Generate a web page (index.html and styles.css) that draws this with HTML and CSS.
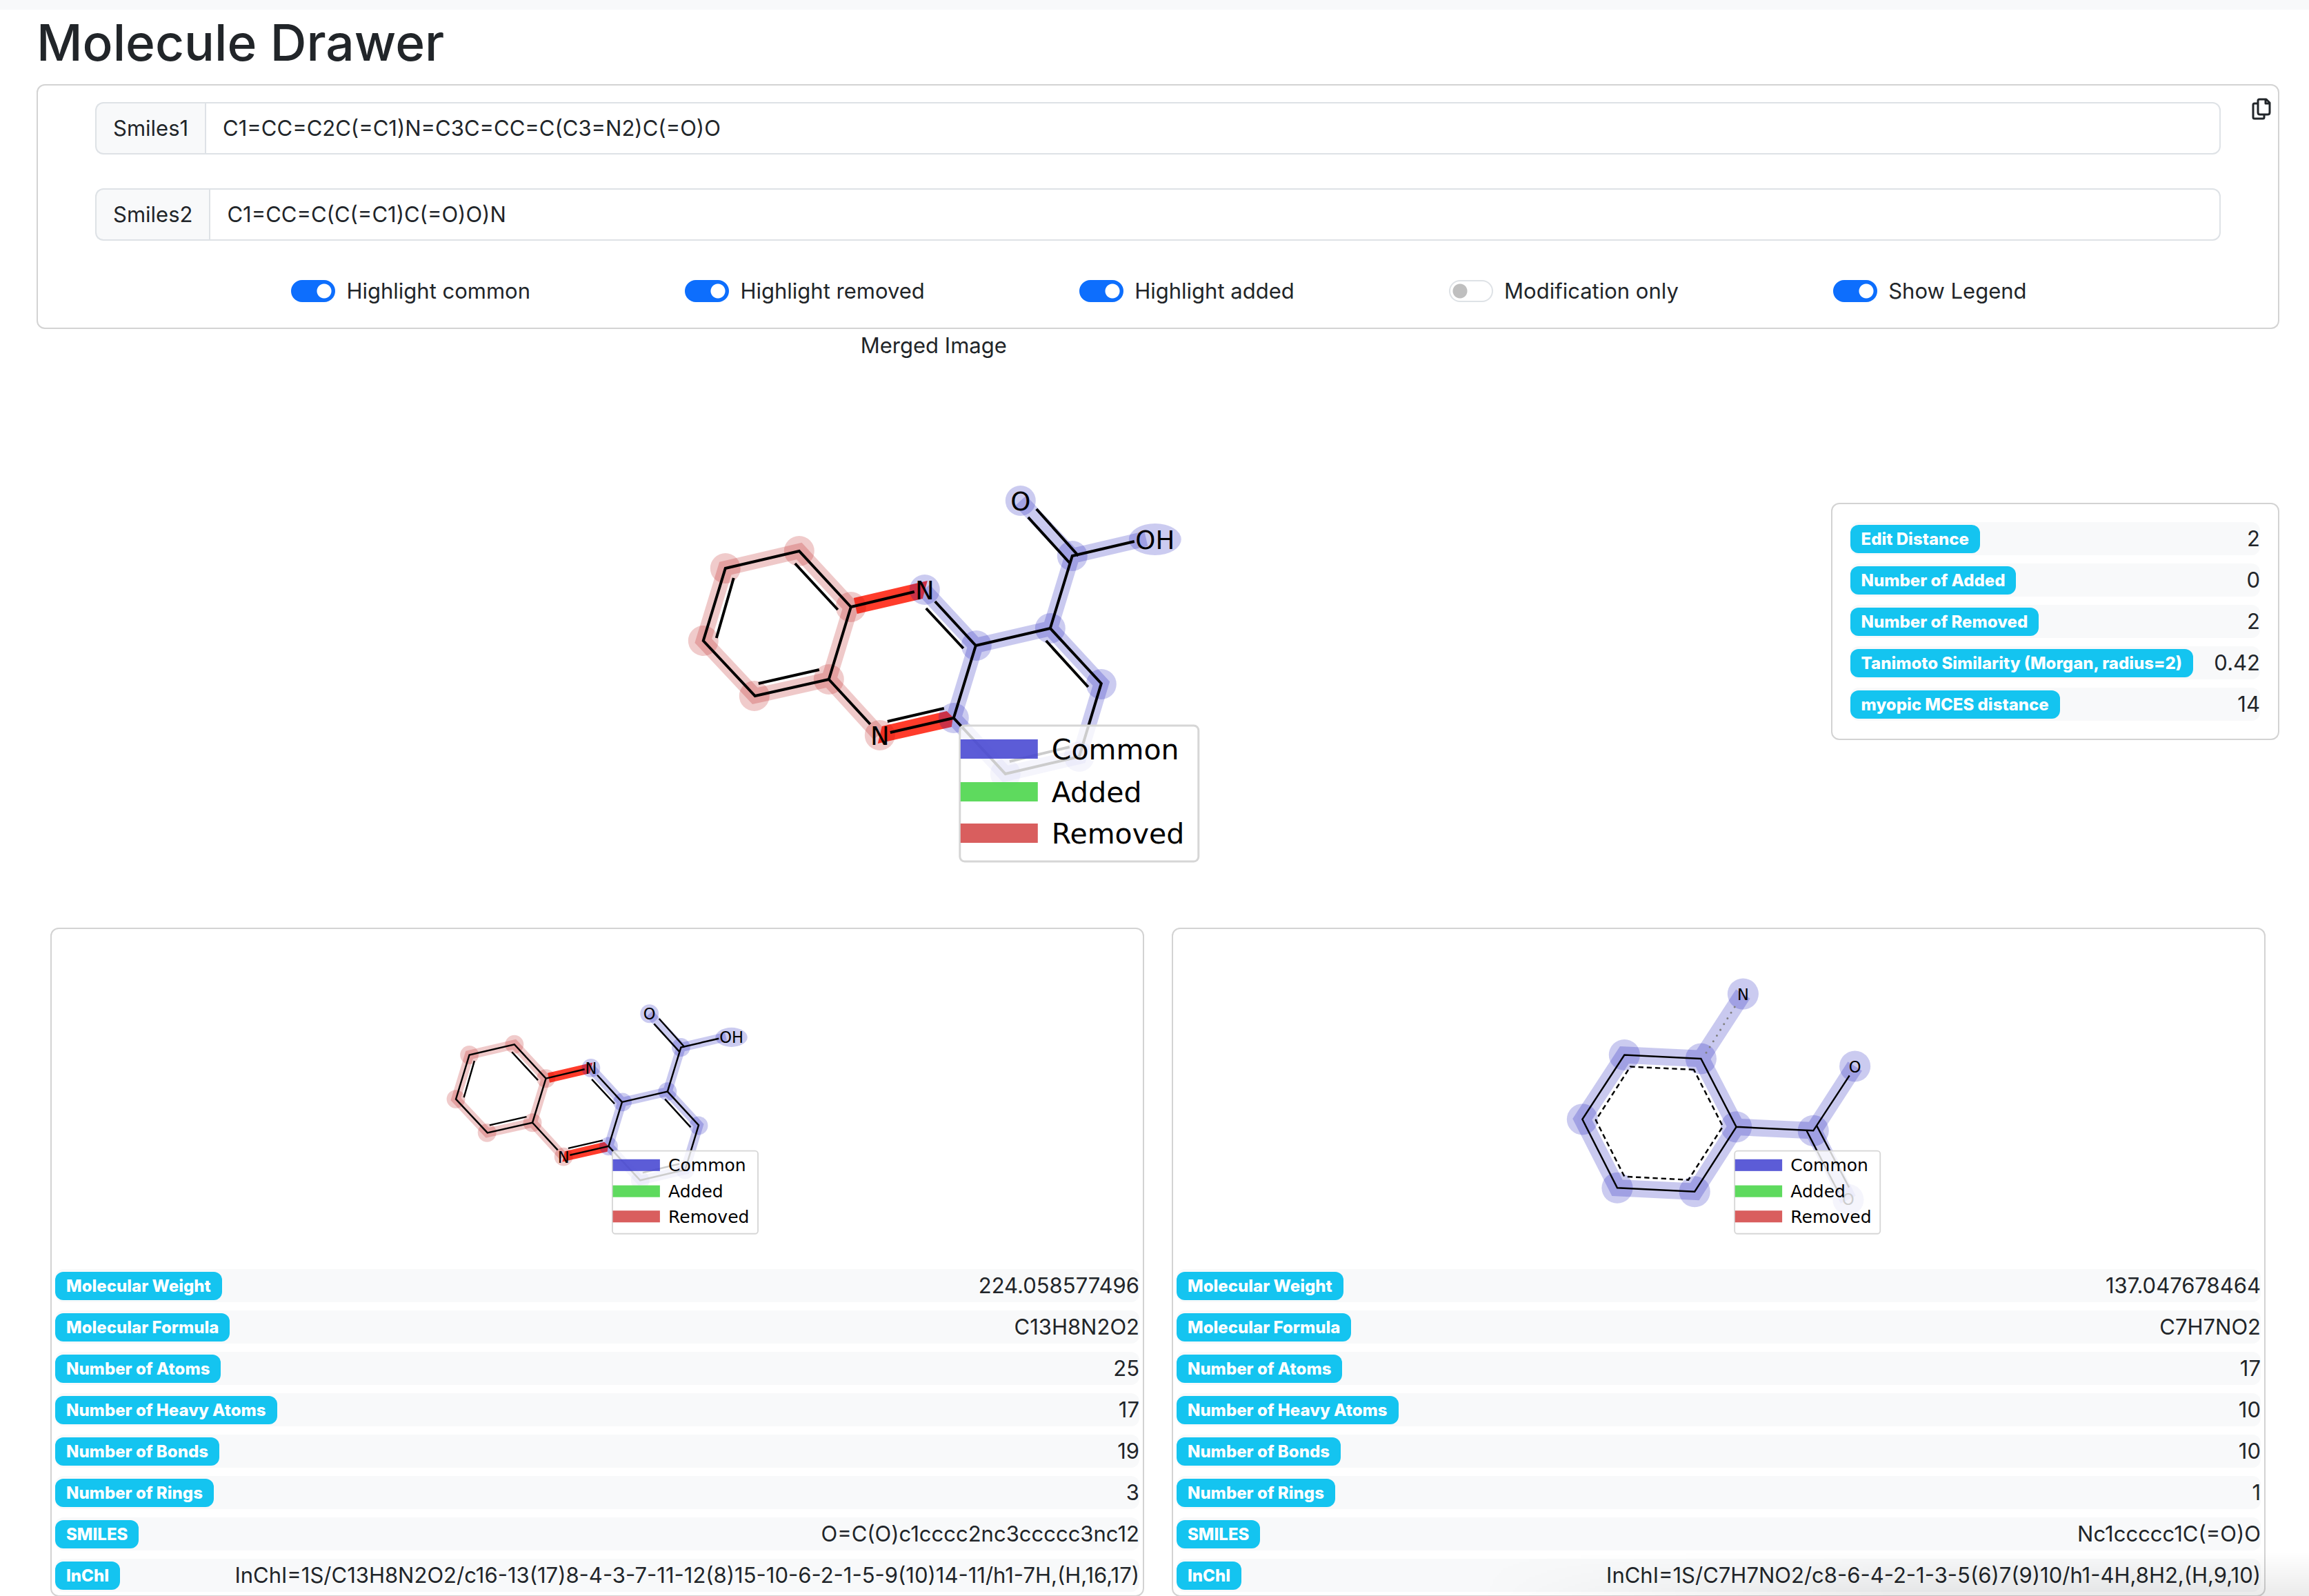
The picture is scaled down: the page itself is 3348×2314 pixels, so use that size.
FILE: index.html
```html
<!DOCTYPE html>
<html lang="en">
<head>
<meta charset="utf-8">
<title>Molecule Drawer</title>
<link rel="stylesheet" href="styles.css">
</head>
<body>
<svg class="defs" aria-hidden="true">
  <symbol id="legend" viewBox="0 0 1600 800">
    <rect class="legend-box" x="838" y="527" width="346" height="197" rx="7"/>
    <rect class="key-common" x="839" y="547" width="112" height="28"/>
    <rect class="key-added" x="839" y="609" width="112" height="28"/>
    <rect class="key-removed" x="839" y="669" width="112" height="28"/>
    <text class="legend-text" x="971" y="576">Common</text>
    <text class="legend-text" x="971" y="638">Added</text>
    <text class="legend-text" x="971" y="698">Removed</text>
  </symbol>
  <symbol id="phenazine" viewBox="0 0 1600 800">
    <g class="halo-removed halo-narrow">
      <path d="M680 355L605 274L498 299L466 404L541 484L648 460Z"/>
      <path d="M648 460L721 540"/>
    </g>
    <g class="halo-common halo-narrow">
      <path d="M969 386L1043 466L1011 572L904 597L829 516L861 411Z"/>
      <path d="M786 330L861 411M969 386L1001 281L926 201M1001 281L1108 256"/>
    </g>
    <path class="cut-bond" d="M684 342L791 317L784 343L689 365ZM725 528L819 506L828 515L826 529L719 553Z"/>
    <g class="atom-removed">
      <circle cx="680" cy="355" r="22"/><circle cx="605" cy="274" r="22"/><circle cx="498" cy="299" r="22"/>
      <circle cx="466" cy="404" r="22"/><circle cx="540" cy="484" r="22"/><circle cx="648" cy="460" r="22"/>
      <circle cx="722" cy="541" r="22"/>
    </g>
    <g class="atom-common">
      <circle cx="787" cy="330" r="22"/><circle cx="862" cy="411" r="22"/><circle cx="829" cy="516" r="22"/>
      <circle cx="969" cy="386" r="22"/><circle cx="1043" cy="467" r="22"/><circle cx="1011" cy="572" r="22"/>
      <circle cx="904" cy="597" r="22"/><circle cx="1001" cy="281" r="22"/><circle cx="926" cy="201" r="22"/>
      <ellipse cx="1121" cy="257" rx="38" ry="23"/>
    </g>
    <g class="bond">
      <path d="M680 355L605 274L498 299L466 404L541 484L648 460ZL772 333M648 460L708 525"/>
      <path d="M802 347L861 411L829 516L904 597L1011 572L1043 466L969 386L861 411M829 516L737 537"/>
      <path d="M969 386L1001 281L1091 260M949 213L1010 281M937 225L997 291"/>
      <path d="M599 292L661 359M510 313L485 400M546 466L634 446M789 357L843 415M733 521L815 502M963 404L1024 471M910 579L997 558"/>
    </g>
    <g class="atom-label">
      <text x="787" y="344">N</text><text x="722" y="555">N</text>
      <text x="926" y="215">O</text><text x="1121" y="271">OH</text>
    </g>
  </symbol>
</svg>

<div class="topbar"></div>
<main class="page">
  <h1 class="title">Molecule Drawer</h1>

  <form class="card controls">
    <div class="fields">
      <div class="field">
        <label class="field-label" for="smiles1">Smiles1</label>
        <input class="field-input" id="smiles1" type="text" value="C1=CC=C2C(=C1)N=C3C=CC=C(C3=N2)C(=O)O">
      </div>
      <div class="field">
        <label class="field-label" for="smiles2">Smiles2</label>
        <input class="field-input" id="smiles2" type="text" value="C1=CC=C(C(=C1)C(=O)O)N">
      </div>
      <div class="switches">
        <label class="switch"><input type="checkbox" checked>Highlight common</label>
        <label class="switch"><input type="checkbox" checked>Highlight removed</label>
        <label class="switch"><input type="checkbox" checked>Highlight added</label>
        <label class="switch"><input type="checkbox">Modification only</label>
        <label class="switch"><input type="checkbox" checked>Show Legend</label>
      </div>
    </div>
    <button class="copy" type="button" aria-label="Copy">
      <svg viewBox="0 0 28 32" width="28" height="32">
        <path d="M11 2H21L26 7V21Q26 24 23 24H12Q9 24 9 21V4Q9 2 11 2ZM20 2V8H26M8 8H4Q2 8 2 10V28Q2 30 4 30H16Q18 30 18 28V25"/>
      </svg>
    </button>
  </form>

  <section class="overview">
    <figure class="merged">
      <figcaption>Merged Image</figcaption>
      <svg class="drawing-large" viewBox="0 0 1600 800">
        <use href="#phenazine" width="1600" height="800"/>
        <use href="#legend" width="1600" height="800"/>
      </svg>
    </figure>
    <dl class="card stats">
      <div class="row"><dt>Edit Distance</dt><dd>2</dd></div>
      <div class="row"><dt>Number of Added</dt><dd>0</dd></div>
      <div class="row"><dt>Number of Removed</dt><dd>2</dd></div>
      <div class="row"><dt>Tanimoto Similarity (Morgan, radius=2)</dt><dd>0.42</dd></div>
      <div class="row"><dt>myopic MCES distance</dt><dd>14</dd></div>
    </dl>
  </section>

  <section class="molecules">
    <article class="card molecule">
      <svg class="drawing-small" viewBox="2 8 1600 800">
        <use href="#phenazine" width="1600" height="800"/>
        <use href="#legend" width="1600" height="800"/>
      </svg>
      <dl class="facts">
        <div class="row"><dt>Molecular Weight</dt><dd>224.058577496</dd></div>
        <div class="row"><dt>Molecular Formula</dt><dd>C13H8N2O2</dd></div>
        <div class="row"><dt>Number of Atoms</dt><dd>25</dd></div>
        <div class="row"><dt>Number of Heavy Atoms</dt><dd>17</dd></div>
        <div class="row"><dt>Number of Bonds</dt><dd>19</dd></div>
        <div class="row"><dt>Number of Rings</dt><dd>3</dd></div>
        <div class="row"><dt>SMILES</dt><dd>O=C(O)c1cccc2nc3ccccc3nc12</dd></div>
        <div class="row"><dt>InChI</dt><dd>InChI=1S/C13H8N2O2/c16-13(17)8-4-3-7-11-12(8)15-10-6-2-1-5-9(10)14-11/h1-7H,(H,16,17)</dd></div>
      </dl>
    </article>
    <article class="card molecule">
      <svg class="drawing-small" viewBox="0 8 1600 800">
        <g class="halo-common halo-wide">
          <path d="M758 308L576 299L476 452L559 615L743 624L842 470Z"/>
          <path d="M858 154L758 308M842 470L1025 479L1124 326M1025 479L1108 643"/>
        </g>
        <g class="atom-common">
          <circle cx="858" cy="154" r="37"/><circle cx="758" cy="308" r="37"/><circle cx="576" cy="299" r="37"/>
          <circle cx="476" cy="452" r="37"/><circle cx="559" cy="615" r="37"/><circle cx="743" cy="624" r="37"/>
          <circle cx="842" cy="470" r="37"/><circle cx="1025" cy="479" r="37"/><circle cx="1124" cy="326" r="37"/>
          <circle cx="1108" cy="643" r="37"/>
        </g>
        <g class="bond">
          <path d="M758 308L576 299L476 452L559 615L743 624L842 470ZM842 470L1025 479L1111 348"/>
          <path d="M1009 479L1085 626M1033 467L1110 614"/>
          <path class="aromatic" d="M741 334L590 327L508 454L576 588L728 596L810 469Z"/>
        </g>
        <path class="dotted" d="M838 185L766 301"/>
        <g class="atom-label">
          <text x="858" y="168">N</text><text x="1124" y="340">O</text><text x="1108" y="656">O</text>
        </g>
        <use href="#legend" width="1600" height="800"/>
      </svg>
      <dl class="facts">
        <div class="row"><dt>Molecular Weight</dt><dd>137.047678464</dd></div>
        <div class="row"><dt>Molecular Formula</dt><dd>C7H7NO2</dd></div>
        <div class="row"><dt>Number of Atoms</dt><dd>17</dd></div>
        <div class="row"><dt>Number of Heavy Atoms</dt><dd>10</dd></div>
        <div class="row"><dt>Number of Bonds</dt><dd>10</dd></div>
        <div class="row"><dt>Number of Rings</dt><dd>1</dd></div>
        <div class="row"><dt>SMILES</dt><dd>Nc1ccccc1C(=O)O</dd></div>
        <div class="row"><dt>InChI</dt><dd>InChI=1S/C7H7NO2/c8-6-4-2-1-3-5(6)7(9)10/h1-4H,8H2,(H,9,10)</dd></div>
      </dl>
    </article>
  </section>
</main>
<div class="corner-shade"></div>
</body>
</html>
```
FILE: styles.css
```css
* {
  box-sizing: border-box;
}

body {
  margin: 0;
  background: #fff;
  color: #212529;
  font: 31px/48px Inter, "Liberation Sans", sans-serif;
}

.defs {
  position: absolute;
  width: 0;
  height: 0;
}

.topbar {
  height: 14px;
  background: #f8f9fa;
}

.page {
  padding: 0 43px 0 53px;
}

.title {
  margin: 0 0 12px;
  font-size: 73px;
  font-weight: 500;
  line-height: 96px;
}

.card {
  border: 2px solid #d3d3d3;
  border-radius: 12px;
  background: #fff;
}

/* Input panel */
.controls {
  display: grid;
  grid-template-columns: minmax(0, 1fr) 83px;
  padding: 24px 0 28px 83px;
}

.fields {
  display: flex;
  flex-direction: column;
  gap: 49px;
}

.field {
  display: flex;
  height: 76px;
}

.field-label {
  padding: 12px 24px;
  border: 2px solid #dee2e6;
  border-right: 0;
  border-radius: 12px 0 0 12px;
  background: #f8f9fa;
}

.field-input {
  flex: 1;
  min-width: 0;
  padding: 12px 24px;
  border: 2px solid #dee2e6;
  border-radius: 0 12px 12px 0;
  background: #fff;
  color: inherit;
  font: inherit;
}

.switches {
  display: flex;
  justify-content: space-evenly;
  padding: 0 57px 1px 60px;
}

.switch {
  display: flex;
  align-items: center;
  gap: 16px;
}

.switch input {
  width: 64px;
  height: 32px;
  margin: 0;
  appearance: none;
  border: 2px solid #dee2e6;
  border-radius: 16px;
  background: radial-gradient(circle at 14px 14px, #bfbfbf 10px, transparent 11px) #fff;
}

.switch input:checked {
  border-color: #0d6efd;
  background: radial-gradient(circle at 46px 14px, #fff 10px, transparent 11px) #0d6efd;
  background-origin: padding-box;
  background-clip: border-box;
}

.copy {
  justify-self: end;
  align-self: start;
  margin: -6px 10px 0 0;
  padding: 0;
  border: 0;
  background: none;
}

.copy svg {
  display: block;
  fill: none;
  stroke: #212529;
  stroke-width: 3px;
  stroke-linejoin: round;
}

/* Merged image and comparison figures */
.overview {
  display: grid;
  grid-template-columns: 4fr 1fr;
  align-items: center;
}

.merged {
  margin: 0;
  text-align: center;
}

.drawing-large {
  display: block;
  width: 100%;
  height: 800px;
}

.drawing-small {
  display: block;
  width: 100%;
  height: 488px;
}

.stats,
.facts {
  display: flex;
  flex-direction: column;
  gap: 12px;
  margin: 0;
}

.stats {
  padding: 26px;
}

.row {
  display: flex;
  justify-content: space-between;
  border-radius: 12px;
  background: #f8f9fa;
}

.row dt {
  align-self: start;
  margin-top: 4px;
  padding: 8px 16px;
  border-radius: 12px;
  background: #14c4f0;
  color: #fff;
  font-size: 24px;
  font-weight: 800;
  line-height: 25px;
  white-space: nowrap;
}

.row dd {
  margin: 0;
  white-space: nowrap;
}

/* Molecule cards */
.molecules {
  display: grid;
  grid-template-columns: 1fr 1fr;
  gap: 40px;
  margin-top: 20px;
  padding: 0 20px;
}

.molecule {
  padding: 5px;
}

/* Soft shade in the lower right corner of the window */
.corner-shade {
  position: fixed;
  right: 0;
  bottom: 0;
  width: 36%;
  height: 64px;
  background: linear-gradient(to bottom, transparent, rgba(0, 0, 0, .08));
  mask-image: linear-gradient(to right, transparent, #000 50%);
  pointer-events: none;
}

/* Drawings */
.bond {
  fill: none;
  stroke: #000;
  stroke-width: 4px;
}

.aromatic {
  stroke-dasharray: 12 8;
}

.dotted {
  fill: none;
  stroke: #808080;
  stroke-width: 5px;
  stroke-linecap: round;
  stroke-dasharray: 0 16;
}

.halo-common,
.halo-removed {
  fill: none;
  opacity: .21;
}

.halo-common {
  stroke: #0808b8;
}

.halo-removed {
  stroke: #b80808;
}

.halo-narrow {
  stroke-width: 22px;
}

.halo-wide {
  stroke-width: 40px;
}

.atom-common {
  fill: rgba(8, 8, 184, .21);
}

.atom-removed {
  fill: rgba(184, 8, 8, .21);
}

.cut-bond {
  fill: #ff3c2b;
}

.atom-label,
.legend-text {
  font-family: "DejaVu Sans", sans-serif;
}

.atom-label {
  font-size: 37px;
  text-anchor: middle;
}

.legend-text {
  font-size: 41px;
}

.legend-box {
  fill: rgba(255, 255, 255, .8);
  stroke: #d6d6d6;
  stroke-width: 3px;
}

.key-common {
  fill: rgba(63, 63, 208, .85);
}

.key-added {
  fill: rgba(66, 212, 66, .85);
}

.key-removed {
  fill: rgba(210, 66, 66, .85);
}
```
